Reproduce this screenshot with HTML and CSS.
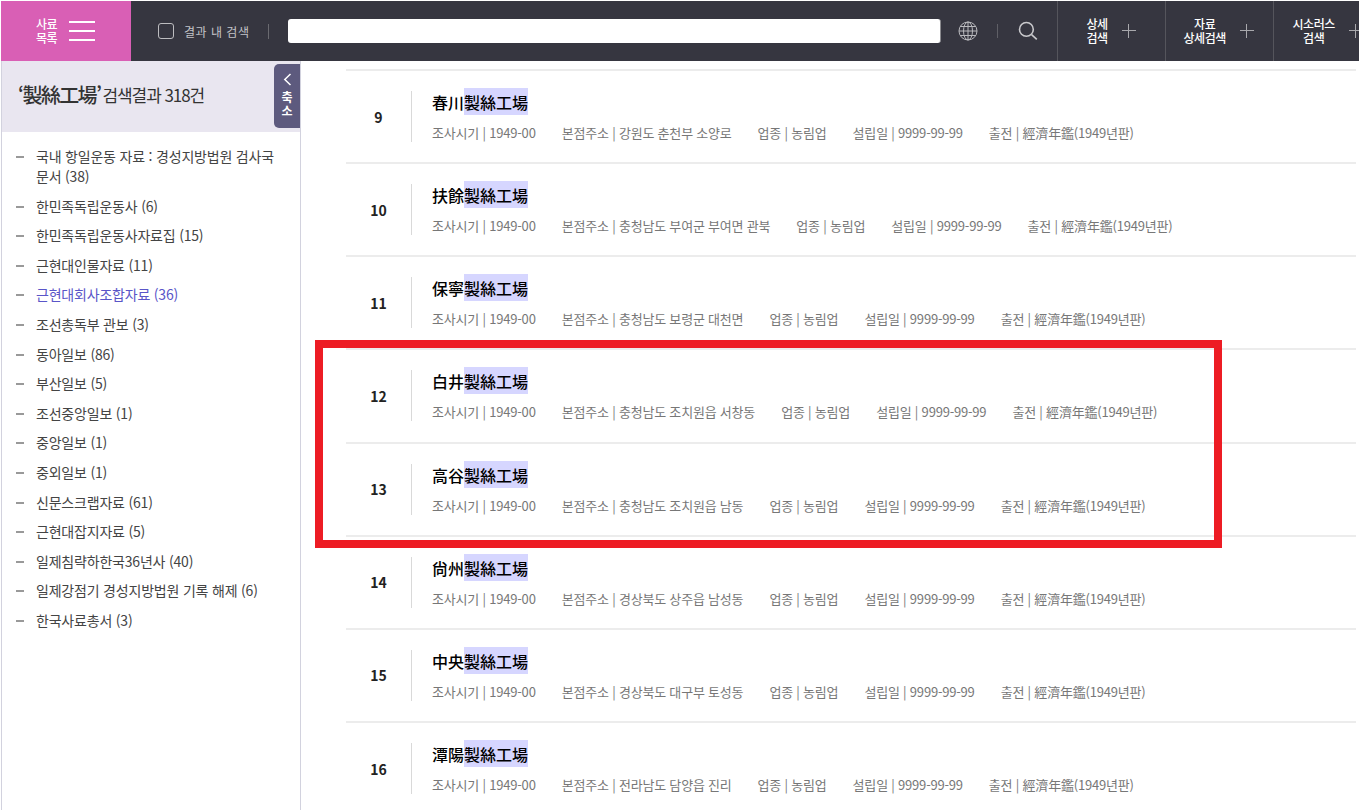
FILE: index.html
```html
<!DOCTYPE html>
<html lang="ko">
<head>
<meta charset="utf-8">
<title>검색결과</title>
<link rel="stylesheet" href="styles.css">
</head>
<body>
<div class="page">
  <header class="topbar">
    <div class="menu-btn">
      <span class="menu-label">사료<br>목록</span>
      <span class="burger"><i></i><i></i><i></i></span>
    </div>
    <label class="within"><span class="check"></span><span class="within-text">결과 내 검색</span></label>
    <div class="search-input"></div>
    <svg class="globe" width="20" height="20" viewBox="0 0 20 20" fill="none" stroke="#b9b9bd" stroke-width="1"><circle cx="10" cy="10" r="9"/><ellipse cx="10" cy="10" rx="4.5" ry="9"/><path d="M10 1v18M1 10h18M2.2 5.5h15.6M2.2 14.5h15.6"/></svg>
    <span class="tick"></span>
    <svg class="lens" width="20" height="20" viewBox="0 0 20 20" fill="none" stroke="#c9c9cc" stroke-width="1.6"><circle cx="8.4" cy="8.4" r="6.9"/><path d="M13.6 13.6l5.2 4.8"/></svg>
    <div class="tab tab-first"><span>상세<br>검색</span><b class="plus"></b></div>
    <div class="tab tab-second"><span>자료<br>상세검색</span><b class="plus"></b></div>
    <div class="tab tab-third"><span>시소러스<br>검색</span><b class="plus"></b></div>
  </header>
  <div class="body">
    <aside class="side">
      <div class="side-head"><span class="query">‘製絲工場’</span><span class="count">검색결과 318건</span></div>
      <button class="collapse"><svg width="9" height="13" viewBox="0 0 9 13" fill="none" stroke="#fff" stroke-width="1.5"><path d="M7.5 1L1.8 6.5l5.7 5.5"/></svg><span>축<br>소</span></button>
      <ul class="cats">
        <li>국내 항일운동 자료 : 경성지방법원 검사국 문서 (38)</li>
        <li>한민족독립운동사 (6)</li>
        <li>한민족독립운동사자료집 (15)</li>
        <li>근현대인물자료 (11)</li>
        <li class="on">근현대회사조합자료 (36)</li>
        <li>조선총독부 관보 (3)</li>
        <li>동아일보 (86)</li>
        <li>부산일보 (5)</li>
        <li>조선중앙일보 (1)</li>
        <li>중앙일보 (1)</li>
        <li>중외일보 (1)</li>
        <li>신문스크랩자료 (61)</li>
        <li>근현대잡지자료 (5)</li>
        <li>일제침략하한국36년사 (40)</li>
        <li>일제강점기 경성지방법원 기록 해제 (6)</li>
        <li>한국사료총서 (3)</li>
      </ul>
    </aside>
    <main class="results">
      <article class="row"><div class="num">9</div><div class="info"><h3>春川<mark>製絲工場</mark></h3><p><span>조사시기 | 1949-00</span><span>본점주소 | 강원도 춘천부 소양로</span><span>업종 | 농림업</span><span>설립일 | 9999-99-99</span><span>출전 | 經濟年鑑(1949년판)</span></p></div></article>
      <article class="row"><div class="num">10</div><div class="info"><h3>扶餘<mark>製絲工場</mark></h3><p><span>조사시기 | 1949-00</span><span>본점주소 | 충청남도 부여군 부여면 관북</span><span>업종 | 농림업</span><span>설립일 | 9999-99-99</span><span>출전 | 經濟年鑑(1949년판)</span></p></div></article>
      <article class="row"><div class="num">11</div><div class="info"><h3>保寧<mark>製絲工場</mark></h3><p><span>조사시기 | 1949-00</span><span>본점주소 | 충청남도 보령군 대천면</span><span>업종 | 농림업</span><span>설립일 | 9999-99-99</span><span>출전 | 經濟年鑑(1949년판)</span></p></div></article>
      <article class="row"><div class="num">12</div><div class="info"><h3>白井<mark>製絲工場</mark></h3><p><span>조사시기 | 1949-00</span><span>본점주소 | 충청남도 조치원읍 서창동</span><span>업종 | 농림업</span><span>설립일 | 9999-99-99</span><span>출전 | 經濟年鑑(1949년판)</span></p></div></article>
      <article class="row"><div class="num">13</div><div class="info"><h3>高谷<mark>製絲工場</mark></h3><p><span>조사시기 | 1949-00</span><span>본점주소 | 충청남도 조치원읍 남동</span><span>업종 | 농림업</span><span>설립일 | 9999-99-99</span><span>출전 | 經濟年鑑(1949년판)</span></p></div></article>
      <article class="row"><div class="num">14</div><div class="info"><h3>尙州<mark>製絲工場</mark></h3><p><span>조사시기 | 1949-00</span><span>본점주소 | 경상북도 상주읍 남성동</span><span>업종 | 농림업</span><span>설립일 | 9999-99-99</span><span>출전 | 經濟年鑑(1949년판)</span></p></div></article>
      <article class="row"><div class="num">15</div><div class="info"><h3>中央<mark>製絲工場</mark></h3><p><span>조사시기 | 1949-00</span><span>본점주소 | 경상북도 대구부 토성동</span><span>업종 | 농림업</span><span>설립일 | 9999-99-99</span><span>출전 | 經濟年鑑(1949년판)</span></p></div></article>
      <article class="row"><div class="num">16</div><div class="info"><h3>潭陽<mark>製絲工場</mark></h3><p><span>조사시기 | 1949-00</span><span>본점주소 | 전라남도 담양읍 진리</span><span>업종 | 농림업</span><span>설립일 | 9999-99-99</span><span>출전 | 經濟年鑑(1949년판)</span></p></div></article>
    </main>
  </div>
  <div class="redbox"></div>
</div>
</body>
</html>
```
FILE: styles.css
```css
* { box-sizing: border-box; }
html, body { margin: 0; padding: 0; height: 810px; overflow: hidden; background: #fff; }
body { font-family: "Noto Sans CJK KR", "Noto Sans", sans-serif; color: #333; }
.page { position: relative; width: 1359px; height: 810px; padding: 1px 0 0 1px; overflow: hidden; }
.topbar { display: flex; align-items: center; height: 60px; background: #363640; color: #fff; }
.menu-btn { display: flex; align-items: center; width: 130px; height: 60px; background: #d95fb5; padding-left: 35px; flex: none; }
.menu-label { font-size: 12px; line-height: 14px; width: 33px; letter-spacing: -0.5px; font-weight: 500; }
.burger { display: flex; flex-direction: column; gap: 7px; width: 26px; }
.burger i { display: block; height: 2px; background: #fff; }
.within { display: flex; align-items: center; margin-left: 27px; flex: none; }
.check { width: 16px; height: 16px; border: 1px solid #bdbdc0; border-radius: 3px; margin-right: 10px; }
.within-text { font-size: 12px; color: #c4c4c8; padding-right: 19px; border-right: 1px solid #6a6a70; line-height: 15px; letter-spacing: 0.5px; }
.search-input { width: 653px; height: 24px; background: #fff; border-radius: 3px; border-right: 1px solid #8a8a8e; margin-left: 19px; flex: none; }
.globe { margin-left: 17px; flex: none; }
.tick { width: 1px; height: 14px; background: #5f5f66; margin-left: 19px; flex: none; }
.lens { margin-left: 20px; flex: none; }
.tab { display: flex; align-items: center; justify-content: space-between; flex: none; width: 108px; height: 60px; border-left: 1px solid #55555c; font-size: 12px; line-height: 14px; text-align: center; font-weight: 500; letter-spacing: -0.4px; }
.tab span { display: block; }
.tab-first { margin-left: 19px; padding: 0 29px 0 28px; }
.tab-second { padding: 0 19px 0 17px; }
.tab-third { padding: 0 0 0 18px; width: 90px; }
.plus { position: relative; display: block; width: 14px; height: 14px; flex: none; }
.plus::before, .plus::after { content: ""; position: absolute; background: #a8a8ac; }
.plus::before { left: 0; right: 0; top: 6px; height: 1px; }
.plus::after { top: 0; bottom: 0; left: 6px; width: 1px; }
.body { display: flex; height: 749px; }
.side { position: relative; width: 300px; flex: none; border-right: 1px solid #d2d2de; border-left: 1px solid #d2d2de; }
.side-head { display: flex; align-items: center; height: 71px; background: #e9e6f0; padding: 0 0 4px 16px; color: #333; }
.query { font-size: 20px; font-weight: 500; letter-spacing: -1.6px; }
.count { font-size: 17px; margin-left: 2px; letter-spacing: -1.05px; }
.collapse { position: absolute; right: 0; top: 3px; width: 26px; height: 64px; background: #5d5a7e; border: 0; border-radius: 5px 0 0 5px; padding: 9px 0 0; color: #fff; font: 700 12px/14px "Noto Sans CJK KR", sans-serif; display: flex; flex-direction: column; align-items: center; gap: 4px; }
.cats { list-style: none; margin: 0; padding: 14px 20px 0 34px; font-size: 14px; line-height: 20px; color: #444; letter-spacing: -0.2px; }
.cats li { position: relative; margin-bottom: 9.6px; }
.cats li::before { content: ""; position: absolute; left: -20px; top: 10px; width: 8px; height: 2px; background: #999; }
.cats li.on { color: #5a55c8; }
.results { flex: 1; padding: 8px 0 0 45px; }
.row { display: flex; align-items: center; height: 93.15px; width: 1010px; border-top: 2px solid #ececec; }
.num { width: 65px; text-align: center; font-size: 14px; font-weight: 700; color: #222; flex: none; }
.info { height: 51px; border-left: 1px solid #d9d9d9; padding-left: 20px; flex: 1; }
h3 { margin: -3px 0 0; height: 27px; font-size: 16px; line-height: 25px; font-weight: 500; color: #000; }
mark { background: #d6d6ff; color: #000; display: inline-block; height: 27px; line-height: 25px; padding-top: 2px; }
p { margin: 8px 0 0; display: flex; gap: 26px; font-size: 13px; line-height: 20px; color: #777; letter-spacing: -0.2px; }
.redbox { position: absolute; left: 315px; top: 340px; width: 907px; height: 208px; border: 8px solid #ed1c24; pointer-events: none; }
```
